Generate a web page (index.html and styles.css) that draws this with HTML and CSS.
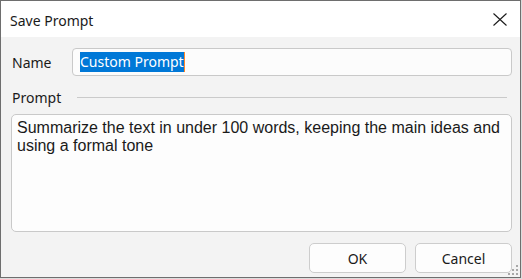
FILE: index.html
```html
<!DOCTYPE html>
<html lang="en">
<head>
    <meta charset="UTF-8">
    <meta name="viewport" content="width=device-width, initial-scale=1.0">
    <title>Save Prompt</title>
    <link rel="stylesheet" href="styles.css">
</head>
<body>
    <div class="window">
        <div class="titlebar">
            <span class="title">Save Prompt</span>
            <svg class="close" width="14" height="14" viewBox="0 0 14 14">
                <path d="M0.5 0.5 L13.5 12.5 M13.5 0.5 L0.5 12.5" stroke="#1a1a1a" stroke-width="1.1" fill="none"/>
            </svg>
        </div>
        <div class="content">
            <div class="name-row">
                <span class="label name-label">Name</span>
                <div class="input"><span class="selected">Custom Prompt</span><span class="caret"></span></div>
            </div>
            <div class="group-head">
                <span class="label group-label">Prompt</span>
                <div class="rule"></div>
            </div>
            <div class="textarea">Summarize the text in under 100 words, keeping the main ideas and using a formal tone</div>
            <div class="buttons">
                <button class="btn">OK</button>
                <button class="btn">Cancel</button>
            </div>
        </div>
        <svg class="grip" width="12" height="12" viewBox="0 0 12 12">
            <rect x="8" y="0" width="2" height="2" fill="#a8a8a8"/>
            <rect x="4" y="4" width="2" height="2" fill="#a8a8a8"/>
            <rect x="8" y="4" width="2" height="2" fill="#a8a8a8"/>
            <rect x="0" y="8" width="2" height="2" fill="#a8a8a8"/>
            <rect x="4" y="8" width="2" height="2" fill="#a8a8a8"/>
            <rect x="8" y="8" width="2" height="2" fill="#a8a8a8"/>
        </svg>
    </div>
</body>
</html>
```

FILE: styles.css
```css
body {
    margin: 0;
    padding: 0;
    background: #dcdcdc;
    font-family: "Noto Sans", "Open Sans", sans-serif;
    color: #1a1a1a;
}
.window {
    position: relative;
    box-sizing: border-box;
    width: 521px;
    height: 278px;
    border: 1px solid #6e6e6e;
    background: #f3f3f3;
    display: flex;
    flex-direction: column;
}
.titlebar {
    height: 36px;
    background: #ffffff;
    display: flex;
    align-items: center;
    padding: 0 13px 0 9px;
}
.title {
    flex: 1;
    font-size: 14px;
    padding-top: 2px;
}
.close {
    margin-top: 1px;
}
.content {
    flex: 1;
    display: flex;
    flex-direction: column;
    padding: 11px 8px 0 10px;
}
.label {
    font-size: 14px;
    padding-left: 1px;
}
.name-row {
    display: flex;
    align-items: center;
    height: 28px;
}
.name-label {
    width: 60px;
}
.input {
    flex: 1;
    box-sizing: border-box;
    height: 28px;
    border: 1px solid #c9c9c9;
    border-radius: 4px;
    background: #fcfcfc;
    display: flex;
    align-items: center;
    padding-left: 7px;
    font-size: 14px;
}
.selected {
    background: #0078d7;
    color: #ffffff;
    line-height: 20px;
}
.caret {
    width: 1px;
    height: 20px;
    background: #ff8728;
}
.group-head {
    display: flex;
    align-items: center;
    height: 20px;
    margin: 11px 0 7px 0;
}
.group-label {
    width: 65px;
}
.rule {
    flex: 1;
    height: 1px;
    background: #cacaca;
    margin-right: 5px;
}
.textarea {
    box-sizing: border-box;
    height: 118px;
    border: 1px solid #c9c9c9;
    border-radius: 5px;
    background: #fdfdfd;
    padding: 4px 5px;
    font-family: "Liberation Sans", Arial, sans-serif;
    font-size: 16px;
    color: #1a1a1a;
}
.buttons {
    display: flex;
    justify-content: flex-end;
    gap: 9px;
    margin-top: 11px;
}
.btn {
    box-sizing: border-box;
    width: 97px;
    height: 30px;
    border: 1px solid #cdcdcd;
    border-radius: 5px;
    background: #fdfdfd;
    font-family: "Noto Sans", "Open Sans", sans-serif;
    font-size: 14px;
    color: #1a1a1a;
    padding: 0;
}
.grip {
    position: absolute;
    right: 0;
    bottom: 0;
}
```
